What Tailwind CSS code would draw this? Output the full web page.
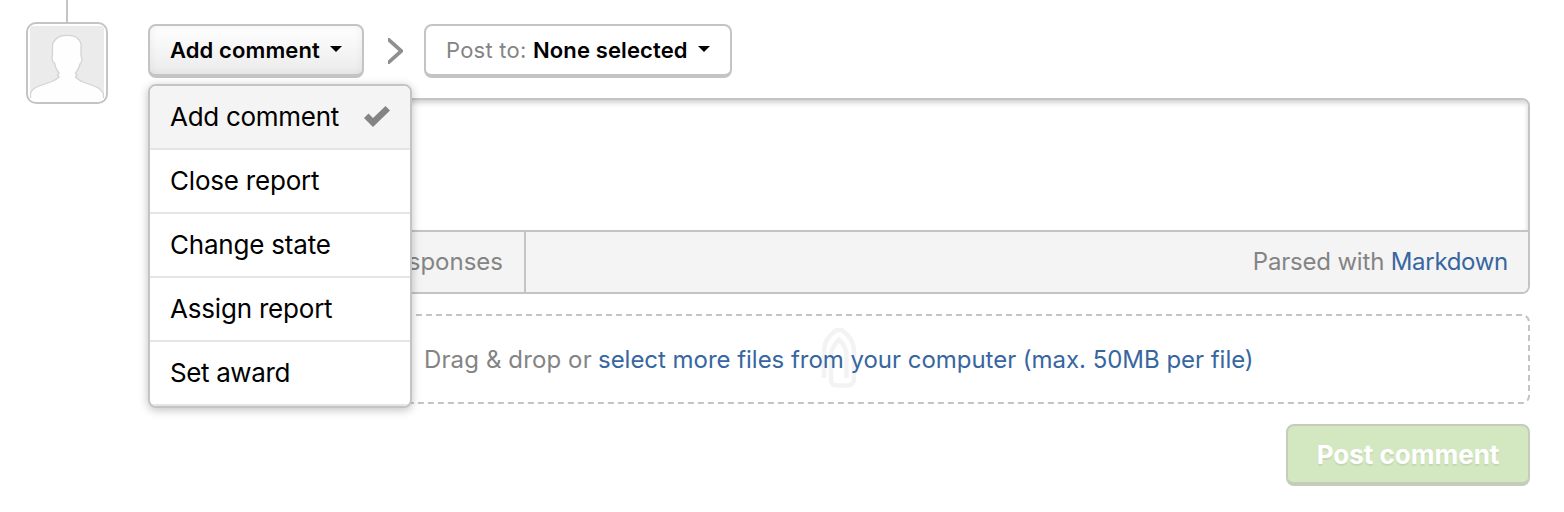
<!DOCTYPE html>
<html lang="en">
<head>
<meta charset="utf-8">
<title>Add comment</title>
<script src="https://cdn.jsdelivr.net/npm/@tailwindcss/browser@4"></script>
</head>
<body class="bg-white font-['Inter',sans-serif] text-black">
<main class="flex h-[512px] w-[1564px] overflow-hidden pl-[26px] pr-[34px] whitespace-nowrap">
  <aside class="flex w-[122px] flex-col items-start">
    <div class="ml-10 h-[22px] w-0.5 bg-[#c4c4c4]"></div>
    <div class="size-[82px] rounded-[10px] border-2 border-[#c4c4c4] bg-white p-0.5">
      <svg class="block size-full" viewBox="0 0 74 74">
        <rect width="74" height="74" rx="3" fill="#ebebeb"/>
        <path d="M0.500 71V68C1 64 4 62 9 60L22 55.500C25 54 27 53 29 51L27.500 49L29 47C26 43 25 41 25 38C22 35 21.500 32 22.500 30V20C22 17 24 15 26 13C30 8.500 44 8 48 13C50.500 15 51.500 18 51 22V30C52.500 33 52 36 50 38C49 43 48 44 45.500 47L47 49L45.500 51C47 53 49 54 53 56L64 60C69 62 73 65 73.500 69V71L73 78H1Z" fill="#fefefe" stroke="#d3d3d3" stroke-width="1.300"/>
        <path d="M1.500 71H72.500V74H1.500Z" fill="#fefefe"/>
        <path d="M0 72H74V74H0Z" fill="#fefefe"/>
      </svg>
    </div>
  </aside>

  <section class="relative flex w-[1382px] flex-col pt-6">
    <div class="flex h-[54px] items-start">
      <button class="flex h-[54px] w-[216px] items-center rounded-lg border-2 border-b-4 border-[#c4c4c4] bg-linear-to-b from-white to-[#ebebeb] pl-5 text-[22px] font-semibold shadow-[inset_0_0_8px_rgba(0,0,0,0.06)]">
        <span class="w-[150px] pt-px text-left tracking-[0.1px]">Add comment</span>
        <svg class="mb-0.5 ml-2.5 h-1.5 w-3" viewBox="0 0 12 6"><path d="M0 0H12L6 6Z"/></svg>
      </button>
      <svg class="mt-3.5 ml-6 h-[26px] w-[15px]" viewBox="0 0 15 26" fill="#8f8f8f"><path d="M0 0H1.500L15 12V14L1.500 26H0V22.500L10.500 13L0 3.500Z"/></svg>
      <button class="ml-[21px] flex h-[54px] w-[308px] items-center rounded-lg border-2 border-b-4 border-[#c4c4c4] bg-white pl-5 text-[22px]">
        <span class="w-[87px] pt-px text-left tracking-[0.25px] text-[#848484]">Post to:</span>
        <span class="w-[155px] pt-px text-left font-semibold tracking-[0.12px]">None selected</span>
        <svg class="mb-0.5 ml-2.5 h-1.5 w-3" viewBox="0 0 12 6"><path d="M0 0H12L6 6Z"/></svg>
      </button>
    </div>

    <div class="mt-5 flex h-[196px] flex-col overflow-hidden rounded-lg border-2 border-[#c4c4c4]">
      <div class="flex-1 bg-white shadow-[inset_0_3px_5px_rgba(0,0,0,0.18)]"></div>
      <div class="flex h-[62px] items-center justify-between border-t-2 border-[#c4c4c4] bg-[#f4f4f4] pr-5 text-2xl text-[#848484]">
        <div class="flex h-full w-[376px] items-center justify-end border-r-2 border-[#c4c4c4] pr-[21px]"><span>responses</span></div>
        <div class="tracking-[-0.19px]"><span>Parsed with</span> <a class="tracking-[-0.3px] text-[#3766a0]">Markdown</a></div>
      </div>
    </div>

    <div class="relative mt-5 h-[90px]">
      <svg class="absolute inset-0 size-full" fill="none"><rect x="1" y="1" width="1380" height="88" rx="7" stroke="#c4c4c4" stroke-width="2" stroke-dasharray="6 4"/></svg>
      <svg class="absolute top-3.5 left-[673px] h-[61px] w-9" viewBox="0 0 36 61" fill="none" stroke="#f3f3f3" stroke-width="4.500" stroke-linejoin="round"><path d="M3 50V22C3.500 13 8 8 14 3Q18 0.500 22 3C28 8 32.500 13 33 22V50Q33 57.500 26 57.500H16Q10 57.500 10 51V27C10.500 20 14 16 18 11.500C22 16 25.500 20 25.500 27V50"/></svg>
      <div class="relative flex h-full items-center pt-px pl-[276px] text-2xl text-[#848484]">
        <span class="w-[174px] tracking-[0.12px]">Drag &amp; drop or</span><a class="tracking-[-0.03px] text-[#3766a0]">select more files from your computer (max. 50MB per file)</a>
      </div>
    </div>

    <button class="mt-5 flex h-[62px] w-[244px] items-center justify-center self-end rounded-lg border-2 border-b-4 border-[#c4cdb9] bg-[#d3e7c1] text-[26px] font-bold text-white [text-shadow:0_2px_1px_rgba(0,0,0,0.07)]"><span>Post comment</span></button>

    <ul class="absolute top-[84px] left-0 flex h-[324px] w-[264px] flex-col overflow-hidden rounded-lg border-2 border-[#c4c4c4] bg-white text-[26px] tracking-[-0.2px] shadow-[0_2px_10px_rgba(0,0,0,0.25)]">
      <li class="flex h-16 shrink-0 items-center border-b-2 border-[#e5e5e5] bg-[#f4f4f4] pb-0.5 pl-5"><span class="w-[169px] tracking-[-0.28px]">Add comment</span>
        <svg class="ml-[25px] h-[21px] w-[26px]" viewBox="0 0 26 21"><path d="M0 12L4.500 7.500L9 12L21.500 0L26 4.500L9 21Z" fill="#848484"/></svg>
      </li>
      <li class="flex h-16 shrink-0 items-center border-b-2 border-[#e5e5e5] pb-0.5 pl-5"><span>Close report</span></li>
      <li class="flex h-16 shrink-0 items-center border-b-2 border-[#e5e5e5] pb-0.5 pl-5"><span>Change state</span></li>
      <li class="flex h-16 shrink-0 items-center border-b-2 border-[#e5e5e5] pb-0.5 pl-5"><span>Assign report</span></li>
      <li class="flex h-16 shrink-0 items-center border-b-2 border-[#e5e5e5] pb-0.5 pl-5"><span class="tracking-[-0.38px]">Set award</span></li>
    </ul>
  </section>
</main>
</body>
</html>
